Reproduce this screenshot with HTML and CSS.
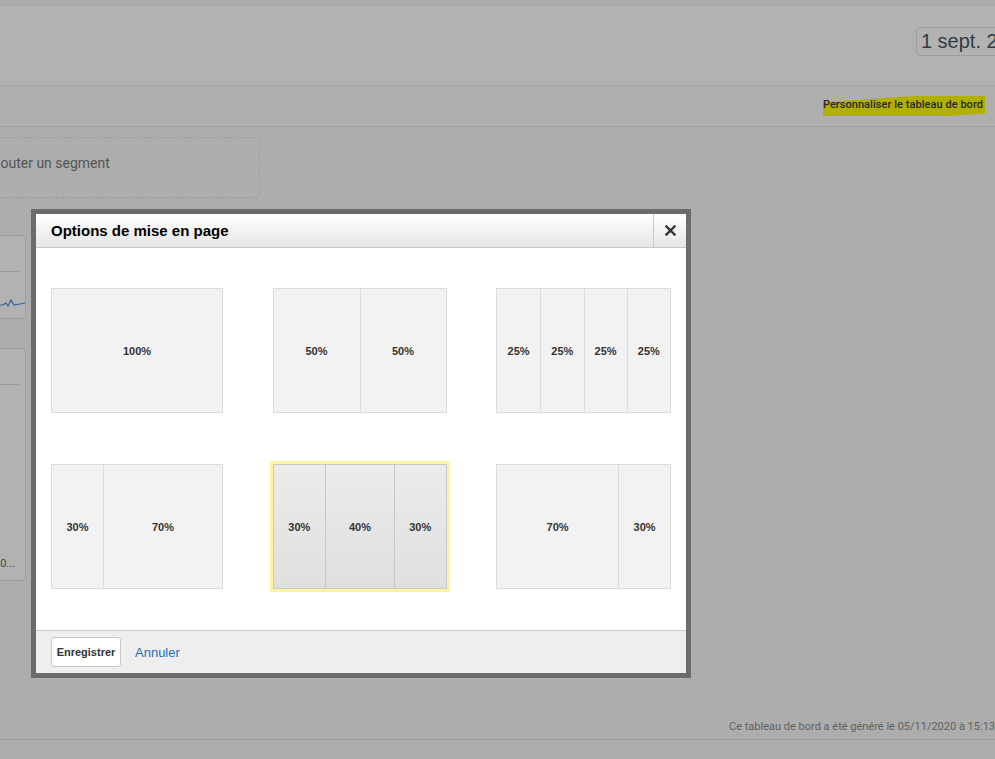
FILE: index.html
```html
<!DOCTYPE html>
<html lang="fr">
<head>
<meta charset="utf-8">
<title>Options de mise en page</title>
<link rel="stylesheet" href="styles.css">
</head>
<body>
<div class="page">
  <div class="topstrip"></div>
  <header class="header">
    <div class="datebox">1 sept. 2020 - 30 sept. 2020</div>
  </header>
  <nav class="navrow">
    <span class="customize">Personnaliser le tableau de bord</span>
  </nav>
  <section class="content">
    <div class="segment">Ajouter un segment</div>
    <div class="card card-small">
      <div class="card-head"></div>
      <svg class="spark" width="30" height="12" viewBox="0 0 30 12"><path d="M0 8 L8 8 L11 6 L13 9 L16 3 L19 8 L30 6" fill="none" stroke="#4a90d9" stroke-width="1.2"/></svg>
    </div>
    <div class="card card-big">
      <div class="card-head"></div>
      <div class="card-foot">20...</div>
    </div>
  </section>
  <footer class="pagefoot">
    <span>Ce tableau de bord a été généré le 05/11/2020 à 15:13</span>
  </footer>
</div>
<div class="overlay"></div>
<div class="dialog">
  <div class="dlg-head">
    <h1 class="dlg-title">Options de mise en page</h1>
    <button class="dlg-close" aria-label="Fermer">
      <svg width="11" height="11" viewBox="0 0 11 11"><path d="M1.5 1.5 L9.5 9.5 M9.5 1.5 L1.5 9.5" stroke="#333" stroke-width="2.4" stroke-linecap="square"/></svg>
    </button>
  </div>
  <div class="dlg-body">
    <div class="layout"><div class="col" style="flex-basis:100%">100%</div></div>
    <div class="layout"><div class="col" style="flex-basis:50%">50%</div><div class="col" style="flex-basis:50%">50%</div></div>
    <div class="layout"><div class="col" style="flex-basis:25%">25%</div><div class="col" style="flex-basis:25%">25%</div><div class="col" style="flex-basis:25%">25%</div><div class="col" style="flex-basis:25%">25%</div></div>
    <div class="layout"><div class="col" style="flex-basis:30%">30%</div><div class="col" style="flex-basis:70%">70%</div></div>
    <div class="layout selected"><div class="col" style="flex-basis:30%">30%</div><div class="col" style="flex-basis:40%">40%</div><div class="col" style="flex-basis:30%">30%</div></div>
    <div class="layout"><div class="col" style="flex-basis:70%">70%</div><div class="col" style="flex-basis:30%">30%</div></div>
  </div>
  <div class="dlg-foot">
    <button class="btn-save">Enregistrer</button>
    <a class="btn-cancel" href="#">Annuler</a>
  </div>
</div>
</body>
</html>
```
FILE: styles.css
```css
* { box-sizing: border-box; }
html, body { margin: 0; padding: 0; }
body {
  width: 995px;
  height: 759px;
  overflow: hidden;
  background: #f7f7f7;
  font-family: Roboto, "Liberation Sans", Arial, sans-serif;
}
.page { width: 995px; height: 759px; overflow: hidden; display: flex; flex-direction: column; }
.topstrip { height: 7px; background: #f5f5f5; }
.header {
  height: 79px;
  background: #ffffff;
  border-bottom: 1px solid #ececec;
  display: flex;
  justify-content: flex-end;
  padding-top: 20px;
  overflow: hidden;
}
.datebox {
  flex: none;
  margin-right: -180px;
  height: 29px;
  border: 1px solid #e2e2e2;
  border-radius: 4px;
  padding: 0 4px;
  font-family: "Liberation Sans", Arial, sans-serif;
  font-size: 20px;
  line-height: 27px;
  color: #4a5560;
  white-space: nowrap;
}
.navrow {
  height: 41px;
  background: #fbfbfb;
  border-bottom: 1px solid #e8e8e8;
  display: flex;
  justify-content: flex-end;
  align-items: center;
  padding-right: 10px;
}
.customize {
  font-size: 11px;
  font-weight: 500;
  color: #3a3a3a;
  letter-spacing: 0.05px;
  padding: 2px 2px 5px 0;
  background: linear-gradient(176deg, transparent 0 18%, #fcfc00 22% 90%, transparent 94%);
}
.content {
  flex: 1;
  position: relative;
  background: #f8f8f8;
  padding-top: 10px;
}
.segment {
  width: 320px;
  height: 61px;
  margin-left: -60px;
  border: 1px dashed #e0e0e0;
  border-radius: 4px;
  padding-left: 47px;
  font-size: 14px;
  line-height: 50px;
  color: #7a7a7a;
}
.card {
  width: 100px;
  margin-left: -74px;
  border: 1px solid #e0e0e0;
  border-radius: 4px;
  background: #ffffff;
  position: relative;
}
.card-small { height: 84px; margin-top: 37px; }
.card-big { height: 233px; margin-top: 29px; }
.card-head { height: 36px; border-bottom: 1px solid #dcdcdc; margin-right: 6px; }
.spark { display: block; margin: 25px 0 0 68px; }
.card-foot {
  position: absolute;
  bottom: 10px;
  left: 67px;
  font-size: 11px;
  color: #666;
}
.pagefoot {
  height: 20px;
  margin-bottom: 19px;
  border-bottom: 1px solid #e4e4e4;
  display: flex;
  justify-content: flex-end;
  font-size: 11px;
  color: #8c8c8c;
  white-space: nowrap;
  background: #f8f8f8;
}
.overlay {
  position: absolute;
  inset: 0;
  background: rgba(0, 0, 0, 0.3);
}
.dialog {
  position: absolute;
  left: 31px;
  top: 209px;
  width: 660px;
  border: 5px solid #6b6b6b;
  background: #ffffff;
  font-family: "Liberation Sans", Arial, sans-serif;
}
.dlg-head {
  height: 34px;
  display: flex;
  align-items: stretch;
  background: linear-gradient(#ffffff, #e6e6e6);
  border-bottom: 1px solid #c9c9c9;
}
.dlg-title {
  flex: 1;
  margin: 0;
  padding-left: 15px;
  font-size: 15px;
  font-weight: bold;
  line-height: 33px;
  color: #000;
}
.dlg-close {
  width: 33px;
  border: 0;
  border-left: 1px solid #c9c9c9;
  background: transparent;
  padding: 0;
  display: flex;
  align-items: center;
  justify-content: center;
}
.dlg-body {
  height: 383px;
  padding: 40px 15px 0;
  display: grid;
  grid-template-columns: 172px 174px 175px;
  grid-template-rows: 125px 125px;
  justify-content: space-between;
  row-gap: 51px;
  border-bottom: 1px solid #c9c9c9;
}
.layout {
  display: flex;
  border: 1px solid #dcdcdc;
  background: #f2f2f2;
}
.col {
  display: flex;
  align-items: center;
  justify-content: center;
  font-size: 11px;
  font-weight: bold;
  color: #333;
}
.col + .col { border-left: 1px solid #dcdcdc; }
.layout.selected {
  background: linear-gradient(#ececec, #dfdfdf);
  border-color: #c8c8c8;
  outline: 3px solid #fdf69a;
}
.layout.selected .col + .col { border-left-color: #c8c8c8; }
.dlg-foot {
  height: 42px;
  background: #eeeeee;
  display: flex;
  align-items: center;
  padding-left: 15px;
}
.btn-save {
  width: 70px;
  height: 30px;
  background: #ffffff;
  border: 1px solid #c8c8c8;
  border-radius: 3px;
  font-family: "Liberation Sans", Arial, sans-serif;
  font-size: 11px;
  font-weight: bold;
  color: #333;
  padding: 0;
}
.btn-cancel {
  margin-left: 14px;
  font-size: 13px;
  color: #1f6fb2;
  text-decoration: none;
}
```
